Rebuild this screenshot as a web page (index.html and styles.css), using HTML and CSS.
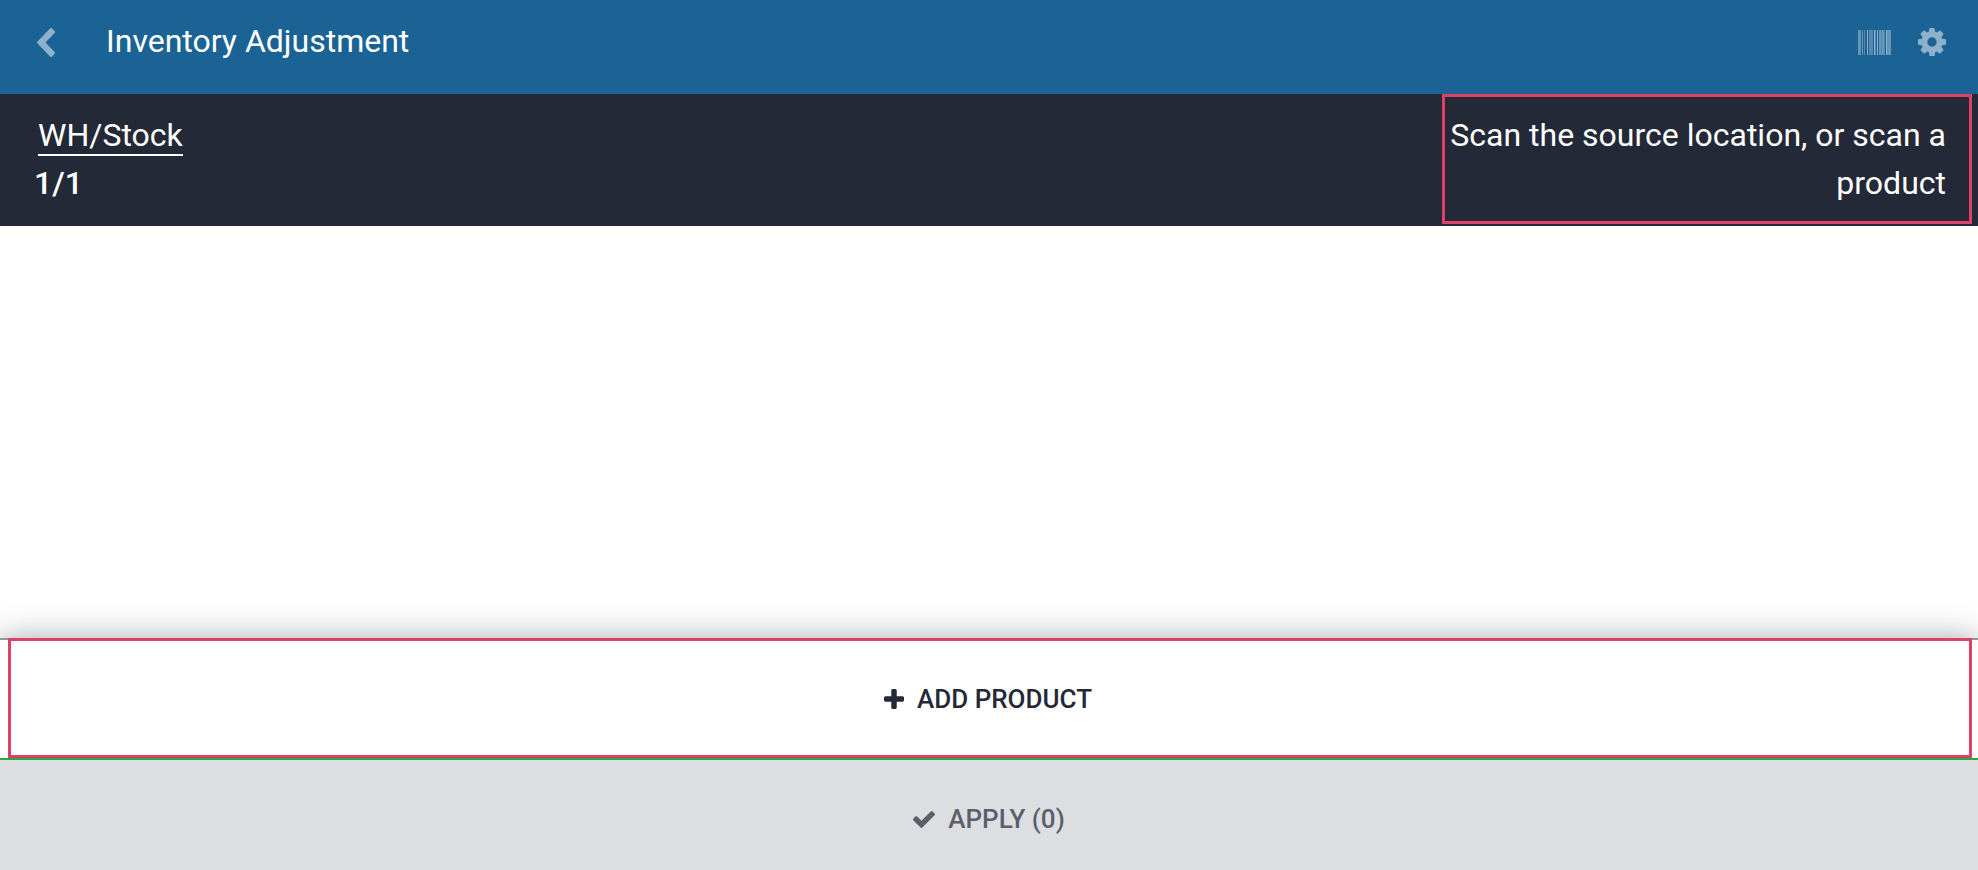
FILE: index.html
```html
<!DOCTYPE html>
<html lang="en">
  <head>
    <meta charset="utf-8">
    <title>Inventory Adjustment</title>
    <meta name="viewport" content="width=device-width, initial-scale=1">
    <link rel="stylesheet" href="styles.css">
  </head>
  <body>
    <header class="header">
      <button class="icon-button exit" type="button" aria-label="Back">
        <svg class="icon-chevron" viewBox="410 26 1036 1612" preserveAspectRatio="none"><path d="M1427 301l-531 531 531 531q19 19 19 45t-19 45l-166 166q-19 19-45 19t-45-19l-742-742q-19-19-19-45t19-45l742-742q19-19 45-19t45 19l166 166q19 19 19 45t-19 45z"/></svg>
      </button>
      <h1 class="title">Inventory Adjustment</h1>
      <button class="icon-button" type="button" aria-label="Print barcodes">
        <svg class="icon-barcode" viewBox="0 0 33 25">
          <path opacity=".65" d="M0 0h3v25h-3zM4 0h1v25h-1zM21 0h2v25h-2zM24 0h2v25h-2zM29 0h4v25h-4z"/>
          <path opacity=".5" d="M6 0h1v25h-1zM11 0h4v25h-4zM17 0h1v25h-1zM23 0h1v25h-1zM26 0h1v25h-1z"/>
          <path d="M9 0h1v25h-1zM16 0h1v25h-1zM19 0h1v25h-1zM28 0h1v25h-1z"/>
        </svg>
      </button>
      <button class="icon-button" type="button" aria-label="Settings">
        <svg class="icon-gear" viewBox="128 128 1536 1536"><path d="M1152 896q0-106-75-181t-181-75-181 75-75 181 75 181 181 75 181-75 75-181zm512-109v222q0 12-8 23t-20 13l-185 28q-19 54-39 91 35 50 107 138 10 12 10 25t-9 23q-27 37-99 108t-94 71q-12 0-26-9l-138-108q-44 23-91 38-16 136-29 186-7 28-36 28h-222q-14 0-24.500-8.500t-11.500-21.500l-28-184q-49-16-90-37l-141 107q-10 9-25 9-14 0-25-11-126-114-165-168-7-10-7-23 0-12 8-23 15-21 51-66.500t54-70.500q-27-50-41-99l-183-27q-13-2-21-12.500t-8-23.500v-222q0-12 8-23t19-13l186-28q14-46 39-92-40-57-107-138-10-12-10-24 0-10 9-23 26-36 98.500-107.500t94.500-71.500q13 0 26 10l138 107q44-23 91-38 16-136 29-186 7-28 36-28h222q14 0 24.500 8.500t11.500 21.500l28 184q49 16 90 37l142-107q9-9 24-9 13 0 25 10 129 119 165 170 7 8 7 22 0 12-8 23-15 21-51 66.500t-54 70.500q26 50 41 98l183 28q13 2 21 12.500t8 23.500z"/></svg>
      </button>
    </header>

    <section class="summary">
      <div class="location">
        <a class="location-name" href="#">WH/Stock</a>
        <div class="page-index">1/1</div>
      </div>
      <p class="message">Scan the source location, or scan a product</p>
    </section>

    <main class="lines"></main>

    <footer class="controls">
      <div class="control-row">
        <button class="control add-product" type="button">
          <svg class="icon-plus" viewBox="192 128 1408 1408"><path d="M1600 736v192q0 40-28 68t-68 28h-416v416q0 40-28 68t-68 28h-192q-40 0-68-28t-28-68v-416h-416q-40 0-68-28t-28-68v-192q0-40 28-68t68-28h416v-416q0-40 28-68t68-28h192q40 0 68 28t28 68v416h416q40 0 68 28t28 68z"/></svg>
          ADD PRODUCT
        </button>
      </div>
      <button class="control apply" type="button" disabled>
        <svg class="icon-check" viewBox="121 334 1550 1188"><path d="M1671 566q0 40-28 68l-724 724-136 136q-28 28-68 28t-68-28l-136-136-362-362q-28-28-28-68t28-68l136-136q28-28 68-28t68 28l294 295 656-657q28-28 68-28t68 28l136 136q28 28 28 68z"/></svg>
        APPLY (0)
      </button>
    </footer>
  </body>
</html>
```

FILE: styles.css
```css
* {
  box-sizing: border-box;
}

body {
  margin: 0;
  min-height: 100vh;
  display: flex;
  flex-direction: column;
  background-color: #fff;
  color: #fff;
  font-family: Roboto, sans-serif;
  font-size: 32px;
  line-height: 48px;
}

button {
  margin: 0;
  padding: 0;
  border: 0;
  background: none;
  color: inherit;
  font: inherit;
  cursor: pointer;
}

svg {
  display: block;
  fill: currentColor;
}

.header {
  display: flex;
  align-items: center;
  gap: 27px;
  height: 94px;
  padding: 0 32px 10px 37px;
  background-color: #1b6395;
}

.icon-button {
  color: rgba(255, 255, 255, 0.5);
}

.exit {
  margin-right: 24px;
}

.icon-chevron {
  width: 18px;
  height: 29px;
}

.icon-barcode {
  width: 33px;
  height: 25px;
}

.icon-gear {
  width: 28px;
  height: 28px;
}

.title {
  flex: 1;
  margin: 0;
  padding-bottom: 2px;
  font-size: 32px;
  font-weight: 400;
}

.summary {
  display: flex;
  justify-content: space-between;
  padding: 0 6px 2px 34px;
  background-color: #242937;
}

.location {
  padding-top: 17px;
}

.location-name {
  display: block;
  margin: 0 4px;
  height: 45px;
  border-bottom: 2px solid #fff;
  color: #fff;
  text-decoration: none;
}

.page-index {
  padding-top: 3px;
  font-weight: 500;
}

.message {
  width: 530px;
  margin: 0;
  padding: 14px 23px 14px 4px;
  border: 3px solid #dc4268;
  text-align: right;
}

.lines {
  flex: 1;
}

.controls {
  color: #242937;
  box-shadow: 0 0 30px rgba(36, 41, 55, 0.4);
}

.control-row {
  padding: 0 6px 0 8px;
  background: linear-gradient(#91949b 2px, #fff 2px);
}

.control {
  display: flex;
  align-items: center;
  justify-content: center;
  gap: 13px;
  width: 100%;
  font-size: 26px;
  font-weight: 500;
}

.add-product {
  height: 120px;
  padding: 2px 4px 0 0;
  border: 3px solid #dc4268;
}

.apply {
  height: 112px;
  padding-top: 8px;
  border-top: 2px solid #28a745;
  background-color: #dddee2;
  color: #5a5f6c;
  cursor: default;
}

.icon-plus {
  width: 20px;
  height: 20px;
}

.icon-check {
  width: 22px;
  height: 17px;
}
```
